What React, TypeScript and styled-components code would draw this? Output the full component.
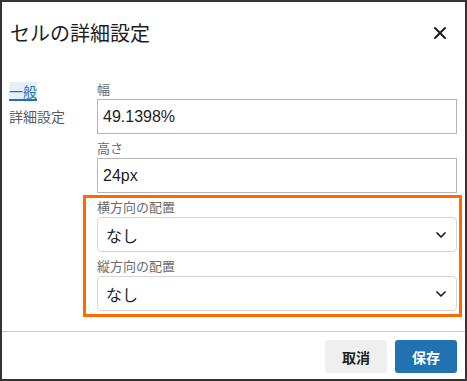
import React from 'react';
import styled, { createGlobalStyle } from 'styled-components';
import { X, ChevronDown } from 'lucide-react';

const GlobalStyle = createGlobalStyle`
  html, body {
    margin: 0;
    padding: 0;
    background: #ffffff;
  }
  body {
    font-family: "Liberation Sans", "Noto Sans CJK JP", sans-serif;
    color: #1e1e1e;
  }
  * {
    box-sizing: border-box;
  }
`;

const Modal = styled.div`
  width: 467px;
  height: 381px;
  border: 2px solid #333333;
  display: flex;
  flex-direction: column;
  background: #ffffff;
`;

const Header = styled.div`
  height: 62px;
  display: flex;
  align-items: center;
  justify-content: space-between;
  padding: 0 13px 0 8px;
`;

const Title = styled.h1`
  margin: 0;
  font-size: 20px;
  font-weight: 400;
  color: #1e1e1e;
  font-family: "Noto Sans CJK JP", sans-serif;
`;

const CloseButton = styled.button`
  border: none;
  background: none;
  padding: 0;
  width: 24px;
  height: 24px;
  display: flex;
  align-items: center;
  justify-content: center;
  color: #1e1e1e;
  cursor: pointer;
`;

const Body = styled.div`
  flex: 1;
  display: grid;
  grid-template-columns: 88px 1fr;
  padding: 16px 8px 0 7px;
`;

const Nav = styled.nav`
  display: flex;
  flex-direction: column;
  align-items: flex-start;
  gap: 6px;
  padding-top: 3px;
`;

const NavItem = styled.a<{ $active?: boolean }>`
  font-family: "Noto Sans CJK JP", sans-serif;
  font-size: 14px;
  line-height: 19px;
  color: ${p => (p.$active ? '#2271b1' : '#555d66')};
  background: ${p => (p.$active ? '#e5eff7' : 'transparent')};
  text-decoration: ${p => (p.$active ? 'underline' : 'none')};
  text-decoration-thickness: 2px;
  text-underline-offset: 2px;
  cursor: pointer;
`;

const Fields = styled.div`
  display: flex;
  flex-direction: column;
  gap: 4px;
`;

const Group = styled.div`
  position: relative;
  display: flex;
  flex-direction: column;
  gap: 4px;

  &::after {
    content: '';
    position: absolute;
    top: -2px;
    bottom: -6px;
    left: -14px;
    right: -5px;
    border: 3px solid #ff6a00;
    pointer-events: none;
  }
`;

const Field = styled.div`
  display: flex;
  flex-direction: column;
`;

const Label = styled.label`
  font-family: "Noto Sans CJK JP", sans-serif;
  font-size: 13px;
  line-height: 20px;
  color: #6b6b6b;
`;

const TextInput = styled.input`
  height: 35px;
  width: 100%;
  border: 1px solid #b5b5b5;
  border-radius: 0;
  padding: 0 5px;
  font-family: "Liberation Sans", sans-serif;
  font-size: 16px;
  color: #1e1e1e;
  outline: none;
`;

const SelectBox = styled.div`
  height: 35px;
  display: flex;
  align-items: center;
  justify-content: space-between;
  border: 1px solid #d6d6d6;
  border-radius: 4px;
  padding: 0 7px 0 8px;
  font-family: "Noto Sans CJK JP", sans-serif;
  font-size: 16px;
  color: #1e1e1e;
`;

const Footer = styled.div`
  border-top: 1px solid #c8c8c8;
  display: flex;
  justify-content: flex-end;
  gap: 8px;
  padding: 8px 8px 6px;
  margin-top: 20px;
`;

const Button = styled.button<{ $primary?: boolean }>`
  width: 62px;
  height: 33px;
  border: none;
  border-radius: 3px;
  font-family: "Noto Sans CJK JP", sans-serif;
  font-size: 14px;
  font-weight: 700;
  background: ${p => (p.$primary ? '#2271b1' : '#efefef')};
  color: ${p => (p.$primary ? '#ffffff' : '#1e1e1e')};
  cursor: pointer;
`;

const Select = ({ value }: { value: string }) => (
  <SelectBox>
    <span>{value}</span>
    <ChevronDown size={16} strokeWidth={2.6} color="#1e1e1e" />
  </SelectBox>
);

export default () => {
  return (
    <Modal>
      <GlobalStyle />
      <Header>
        <Title>セルの詳細設定</Title>
        <CloseButton aria-label="閉じる">
          <X size={20} strokeWidth={2.4} />
        </CloseButton>
      </Header>

      <Body>
        <Nav>
          <NavItem $active>一般</NavItem>
          <NavItem>詳細設定</NavItem>
        </Nav>

        <Fields>
          <Field>
            <Label>幅</Label>
            <TextInput defaultValue="49.1398%" />
          </Field>
          <Field>
            <Label>高さ</Label>
            <TextInput defaultValue="24px" />
          </Field>
          <Group>
            <Field>
              <Label>横方向の配置</Label>
              <Select value="なし" />
            </Field>
            <Field>
              <Label>縦方向の配置</Label>
              <Select value="なし" />
            </Field>
          </Group>
        </Fields>
      </Body>

      <Footer>
        <Button>取消</Button>
        <Button $primary>保存</Button>
      </Footer>
    </Modal>
  );
};
